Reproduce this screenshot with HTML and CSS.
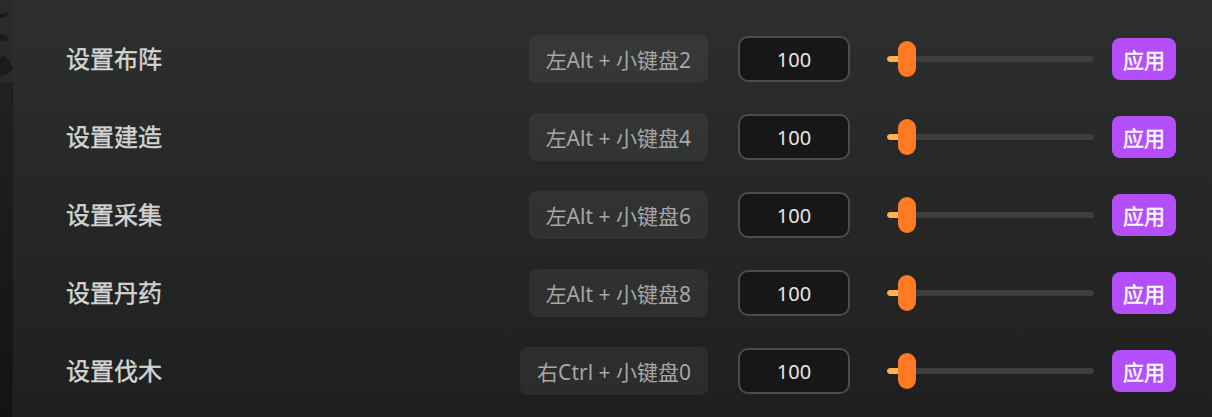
FILE: index.html
```html
<!DOCTYPE html>
<html lang="zh-CN">
<head>
<meta charset="utf-8">
<title>快捷键设置</title>
<link rel="stylesheet" href="styles.css">
</head>
<body>
<div class="app">
  <aside class="side">
    <svg class="side-art" width="13" height="82" viewBox="0 0 13 82">
      <rect width="13" height="82" fill="#282b29"/>
      <path d="M0 14 L9 12 L6 17 L0 18 Z" fill="#1a1b1a"/>
      <path d="M0 34 L10 37 L7 41 L0 40 Z" fill="#1b1c1b"/>
      <path d="M0 58 L4 55 L9 61 L13 68 L8 74 L0 76 Z" fill="#1a1b1a"/>
    </svg>
  </aside>
  <main class="panel">
    <div class="row">
      <div class="label">设置布阵</div>
      <div class="keys">左Alt + 小键盘2</div>
      <div class="num">100</div>
      <div class="slider"><div class="track"><div class="fill"></div></div><div class="thumb"></div></div>
      <button class="apply">应用</button>
    </div>
    <div class="row">
      <div class="label">设置建造</div>
      <div class="keys">左Alt + 小键盘4</div>
      <div class="num">100</div>
      <div class="slider"><div class="track"><div class="fill"></div></div><div class="thumb"></div></div>
      <button class="apply">应用</button>
    </div>
    <div class="row">
      <div class="label">设置采集</div>
      <div class="keys">左Alt + 小键盘6</div>
      <div class="num">100</div>
      <div class="slider"><div class="track"><div class="fill"></div></div><div class="thumb"></div></div>
      <button class="apply">应用</button>
    </div>
    <div class="row">
      <div class="label">设置丹药</div>
      <div class="keys">左Alt + 小键盘8</div>
      <div class="num">100</div>
      <div class="slider"><div class="track"><div class="fill"></div></div><div class="thumb"></div></div>
      <button class="apply">应用</button>
    </div>
    <div class="row">
      <div class="label">设置伐木</div>
      <div class="keys">右Ctrl + 小键盘0</div>
      <div class="num">100</div>
      <div class="slider"><div class="track"><div class="fill"></div></div><div class="thumb"></div></div>
      <button class="apply">应用</button>
    </div>
  </main>
</div>
</body>
</html>
```
FILE: styles.css
```css
* { box-sizing: border-box; }
html, body {
  margin: 0;
  padding: 0;
  width: 1212px;
  height: 417px;
  overflow: hidden;
  background: #1c1c1c;
  font-family: "Noto Sans", "Noto Sans CJK SC", sans-serif;
}
.app {
  display: flex;
  height: 417px;
}
.side {
  width: 13px;
  flex: none;
  background: linear-gradient(180deg, #232624 0%, #1b1c1b 50%, #131313 100%);
  border-right: 1px solid #1a1b1a;
}
.side-art { display: block; }
.panel {
  flex: 1;
  background: linear-gradient(180deg, #2c2f2d 0%, #262827 45%, #1f1f1f 100%);
  padding: 20px 36px 0 53px;
}
.row {
  display: flex;
  align-items: center;
  height: 78px;
}
.label {
  flex: 1;
  font-family: "Noto Sans CJK SC", sans-serif;
  font-size: 24px;
  font-weight: 400;
  -webkit-text-stroke: 0.45px #d4d4d4;
  color: #d4d4d4;
  line-height: 1;
  margin-top: -2px;
}
.keys {
  height: 48px;
  padding: 0 17px;
  display: flex;
  align-items: center;
  border-radius: 8px;
  background: rgba(255, 255, 255, 0.055);
  color: #a6a6a6;
  font-size: 21px;
  white-space: pre;
  margin-right: 30px;
}
.num {
  width: 112px;
  height: 46px;
  border: 2px solid #4c4c4c;
  border-radius: 10px;
  background: #171717;
  color: #e6e6e6;
  font-size: 20px;
  display: flex;
  align-items: center;
  justify-content: center;
  margin-right: 37px;
}
.slider {
  position: relative;
  width: 207px;
  height: 36px;
  display: flex;
  align-items: center;
  margin-right: 18px;
}
.track {
  width: 100%;
  height: 6px;
  border-radius: 3px;
  background: #3d3f3d;
  overflow: hidden;
}
.fill {
  width: 16px;
  height: 100%;
  border-radius: 3px;
  background: #fcb44b;
}
.thumb {
  position: absolute;
  left: 11px;
  top: 0;
  width: 18px;
  height: 36px;
  border-radius: 9px;
  background: #ff7a22;
}
.apply {
  width: 64px;
  height: 42px;
  border: none;
  border-radius: 8px;
  background: #b34ef9;
  color: #ffffff;
  font-family: "Noto Sans CJK SC", sans-serif;
  font-size: 21px;
  font-weight: 400;
  -webkit-text-stroke: 0.4px #ffffff;
  padding: 0;
}
```
